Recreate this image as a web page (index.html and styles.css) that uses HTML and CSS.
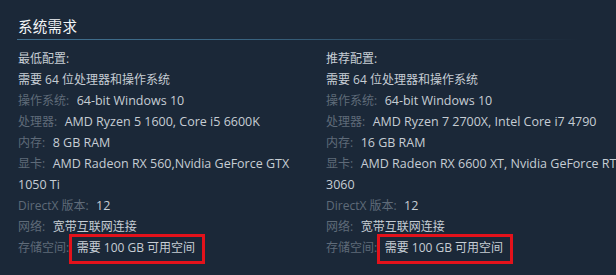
FILE: index.html
```html
<!DOCTYPE html>
<html lang="zh-CN">
<head>
<meta charset="utf-8">
<title>系统需求</title>
<link rel="stylesheet" href="styles.css">
</head>
<body>
<div class="sysreq">
  <h2 class="title">系统需求</h2>
  <div class="cols">
    <ul class="col">
      <li class="head">最低配置:</li>
      <li class="zh">需要 64 位处理器和操作系统</li>
      <li><span class="k">操作系统:</span><span class="v">64-bit Windows 10</span></li>
      <li><span class="k">处理器:</span><span class="v">AMD Ryzen 5 1600, Core i5 6600K</span></li>
      <li><span class="k">内存:</span><span class="v">8 GB RAM</span></li>
      <li><span class="k">显卡:</span><span class="v">AMD Radeon RX 560,Nvidia GeForce GTX 1050 Ti</span></li>
      <li><span class="k">DirectX 版本:</span><span class="v">12</span></li>
      <li><span class="k">网络:</span><span class="v zh">宽带互联网连接</span></li>
      <li><span class="k">存储空间:</span><span class="v zh mark">需要 100 GB 可用空间</span></li>
    </ul>
    <ul class="col">
      <li class="head">推荐配置:</li>
      <li class="zh">需要 64 位处理器和操作系统</li>
      <li><span class="k">操作系统:</span><span class="v">64-bit Windows 10</span></li>
      <li><span class="k">处理器:</span><span class="v">AMD Ryzen 7 2700X, Intel Core i7 4790</span></li>
      <li><span class="k">内存:</span><span class="v">16 GB RAM</span></li>
      <li><span class="k">显卡:</span><span class="v">AMD Radeon RX 6600 XT, Nvidia GeForce RTX 3060</span></li>
      <li><span class="k">DirectX 版本:</span><span class="v">12</span></li>
      <li><span class="k">网络:</span><span class="v zh">宽带互联网连接</span></li>
      <li><span class="k">存储空间:</span><span class="v zh mark">需要 100 GB 可用空间</span></li>
    </ul>
  </div>
</div>
</body>
</html>
```
FILE: styles.css
```css
html, body {
  margin: 0;
  padding: 0;
  overflow: hidden;
  background: #1b2838;
}

body {
  width: 616px;
  height: 275px;
  font-family: "Open Sans", "Noto Sans CJK SC", sans-serif;
  font-size: 12px;
  color: #c6cdd4;
}

.sysreq {
  padding-left: 18px;
  width: 640px;
}

.title {
  margin: 16px 0 0 -1px;
  padding: 0 0 2px 1px;
  font-size: 14.5px;
  line-height: 21px;
  font-weight: normal;
  color: #f2f4f6;
  letter-spacing: 0.3px;
  width: 560px;
  border-bottom: 1px solid transparent;
  border-image: linear-gradient(to right, #41708f 0%, #3a6582 40%, rgba(58, 101, 130, 0) 100%) 1;
}

.cols {
  display: grid;
  grid-template-columns: 295px 305px;
  column-gap: 13px;
  margin-top: 8px;
}

.col {
  list-style: none;
  margin: 0;
  padding: 0;
}

.col li {
  line-height: 21px;
  font-size: 12px;
}

.k {
  color: #5f6b79;
  margin-right: 7.5px;
}

.v {
  font-size: 12.5px;
  color: #c6cdd4;
}

.v.zh {
  font-size: 12px;
}

.head {
  color: #c6cdd4;
}

.mark {
  position: relative;
  display: inline-block;
}

.mark::after {
  content: "";
  position: absolute;
  left: -8px;
  right: -10px;
  top: -3px;
  bottom: -6px;
  border: 3px solid #e3121b;
  pointer-events: none;
}
```
